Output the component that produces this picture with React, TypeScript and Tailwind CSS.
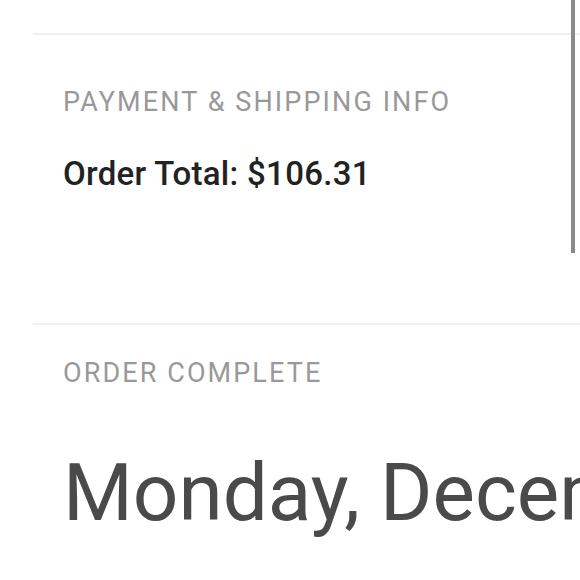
export default function App() {
  return (
    <div className="relative w-[580px] h-[580px] overflow-hidden bg-white font-['Roboto',sans-serif]">
      <div className="ml-[33px] pt-[33px]">
        {/* Payment section */}
        <div className="h-[2px] bg-[#f0f0f0]" />
        <section className="pl-[30px] pt-[54px]">
          <h2 className="text-[27px] leading-[27px] tracking-[2.1px] text-[#999999] whitespace-nowrap">
            PAYMENT &amp; SHIPPING INFO
          </h2>
          <p className="mt-[41px] text-[33px] leading-[33px] font-medium tracking-[0.3px] text-[#222222] whitespace-nowrap">
            Order Total: $106.31
          </p>
        </section>

        <div className="mt-[133px] h-[2px] bg-[#f0f0f0]" />
        <section className="pl-[30px] pt-[35px]">
          <h2 className="text-[27px] leading-[27px] tracking-[2.1px] text-[#999999] whitespace-nowrap">
            ORDER COMPLETE
          </h2>
          <p className="mt-[66px] text-[80px] leading-[80px] text-[#4a4a4a] whitespace-nowrap">
            Monday, December 2
          </p>
        </section>
      </div>

      {/* scrollbar */}
      <div className="absolute top-0 right-[5px] w-[4px] h-[253px] bg-[#8a8a8a]" />
    </div>
  )
}
